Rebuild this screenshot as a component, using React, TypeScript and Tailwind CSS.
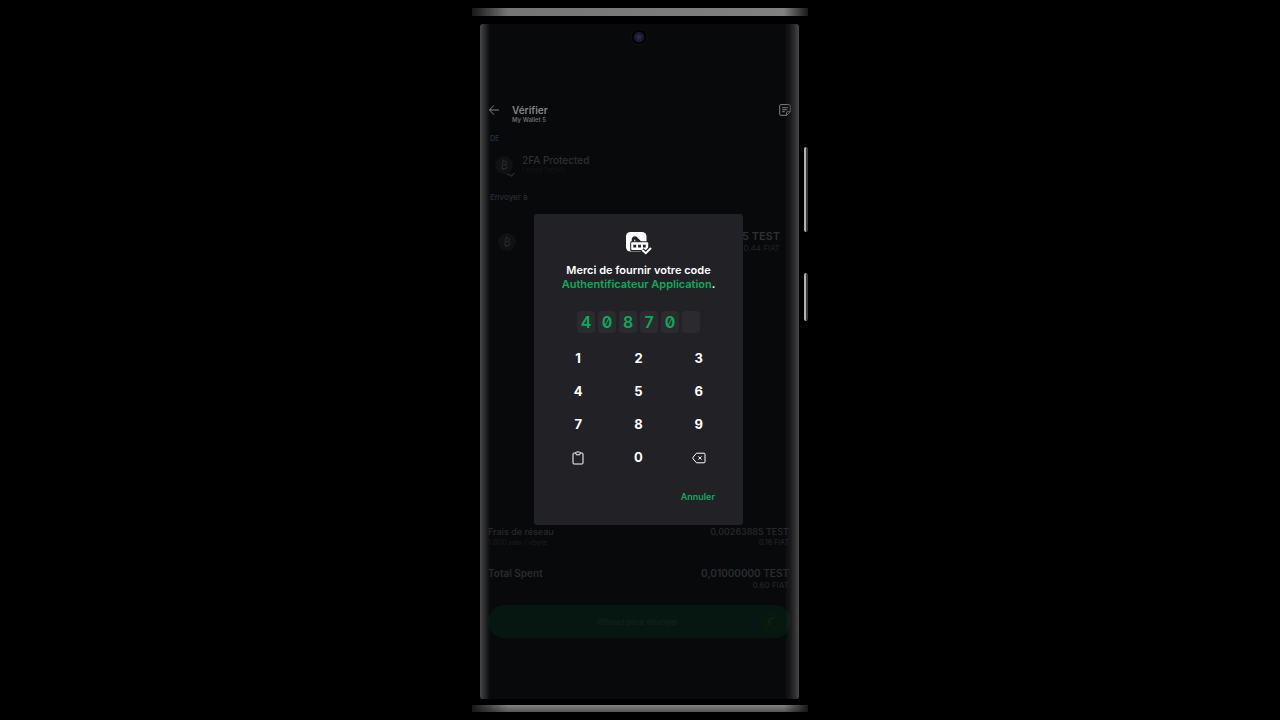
import type { ReactNode } from "react";

const code = ["4", "0", "8", "7", "0", ""];

function BackIcon() {
  return (
    <svg viewBox="0 0 12 12" className="size-3" fill="none" stroke="currentColor" strokeWidth="1">
      <path d="M11 6H1.5M6 1.3 1.4 6 6 10.7" />
    </svg>
  );
}

function NoteIcon() {
  return (
    <svg viewBox="0 0 12 12" className="size-3" fill="none" stroke="currentColor" strokeWidth="1">
      <path d="M11.3 7.6V1.6a1 1 0 0 0-1-1H1.7a1 1 0 0 0-1 1v8.7a1 1 0 0 0 1 1h6l3.6-3.7H8.6a1 1 0 0 0-1 1v2.6" />
      <path d="M3.2 3.7h5.6M3.2 5.7h5M3.2 7.7h2.6" />
    </svg>
  );
}

function AuthenticatorIcon() {
  return (
    <svg viewBox="0 0 26 23" className="h-[23px] w-[26px]" fill="none">
      <rect x="0" y="0" width="20.5" height="19.5" rx="4.500" fill="#ffffff" />
      <path d="M5.700 9.800V7.500C5.700 5.500 7 4.200 8.700 4.200c1 0 1.700.3 2.400 1L15.500 9.800h-5L8.200 7.200v2.600Z" fill="#222226" />
      <rect x="4.200" y="9.300" width="19" height="10" rx="1.500" fill="#222226" />
      <rect x="5.200" y="10.300" width="17" height="7.700" rx="1" fill="#ffffff" />
      <path d="M7.300 12.700h2.900v2.900H7.300zM12.100 12.700H15v2.900h-2.900zM16.900 12.700h2.900v2.900h-2.900z" fill="#222226" />
      <path d="m16 18 3.800 3.300L25 16" stroke="#222226" strokeWidth="4.500" />
      <path d="m16.200 18 3.600 3.200L25 16" stroke="#ffffff" strokeWidth="2" />
    </svg>
  );
}

function ClipboardIcon() {
  return (
    <svg viewBox="0 0 12 14" className="h-3.5 w-3" fill="none" stroke="currentColor" strokeWidth="1">
      <path d="M3.600 2H2a1 1 0 0 0-1 1v9a1 1 0 0 0 1 1h8a1 1 0 0 0 1-1V3a1 1 0 0 0-1-1H8.400" />
      <path d="M3.600 1.600 4.800 1h2.400l1.200.6-.7 2.200H4.300z" />
    </svg>
  );
}

function BackspaceIcon() {
  return (
    <svg viewBox="0 0 14 12" className="h-3 w-3.5" fill="none" stroke="currentColor" strokeWidth="1">
      <path d="M4.500 1.200h7.500a1 1 0 0 1 1 1v7.600a1 1 0 0 1-1 1H4.500L1 6.800V5.200z" />
      <path d="m6.300 4.400 3.200 3.200M9.500 4.400 6.300 7.600" />
    </svg>
  );
}

function CoinIcon({ checked = false }: { checked?: boolean }) {
  return (
    <svg viewBox="0 0 26 26" className="size-[26px] shrink-0" fill="none">
      <circle cx="12" cy="12" r="9" fill="#101113" />
      <g stroke="#28292b" strokeWidth="1.100">
        <path d="M10.500 8h2a1.700 1.700 0 0 1 0 3.700h-2.200 2.600a1.900 1.900 0 0 1 0 3.900H9.500M10.800 8l-1 7.600M11.600 6.500V8M11.200 15.600v1.700" />
      </g>
      {checked && <path d="M15 21.500h2.500m.5 0 1.500 1.500 3-3" stroke="#28292b" strokeWidth="1.500" />}
    </svg>
  );
}

function Key({ label, children }: { label: string; children?: ReactNode }) {
  return (
    <button type="button" aria-label={label} className="flex items-center justify-center text-[13px] font-bold text-white">
      {children ?? label}
    </button>
  );
}

function Amount({ label, note, value, fiat, strong = false }: { label: string; note?: string; value: string; fiat: string; strong?: boolean }) {
  return (
    <div className={strong ? "flex justify-between text-[10px] font-semibold leading-3 text-[#2b2c2e]" : "flex justify-between text-[9px] font-medium leading-3 text-[#28292b]"}>
      <div>
        <p>{label}</p>
        {note && <p className="text-[7px] leading-[10px] text-[#18191b]">{note}</p>}
      </div>
      <div className="text-right">
        <p>{value}</p>
        <p className={strong ? "text-[8px] font-medium text-[#222325]" : "text-[7px] font-medium leading-[10px] text-[#222325]"}>{fiat}</p>
      </div>
    </div>
  );
}

function CodeDialog() {
  return (
    <section
      role="dialog"
      aria-labelledby="code-title"
      className="absolute inset-x-[54px] top-[190px] mr-0.5 flex flex-col items-center rounded-[3px] bg-[#222226] pt-[18px] pb-[21px]"
    >
      <AuthenticatorIcon />
      <h2 id="code-title" className="mt-2 text-center text-[11px] font-semibold leading-[14px] text-white">
        Merci de fournir votre code
        <br />
        <span className="text-[#0eaa5b]">Authentificateur Application</span>.
      </h2>
      <div className="mt-5 flex gap-[3px]">
        {code.map((digit, index) => (
          <input
            key={index}
            aria-label={`Chiffre ${index + 1}`}
            defaultValue={digit}
            maxLength={1}
            inputMode="numeric"
            className="h-[22px] w-[18px] rounded-[4px] bg-[#2b2b2f] text-center font-['Inter',sans-serif] text-base font-semibold leading-none text-[#0eaa5b] slashed-zero outline-none"
          />
        ))}
      </div>
      <div className="mt-[9px] grid w-[181px] grid-cols-3 auto-rows-[33px]">
        {["1", "2", "3", "4", "5", "6", "7", "8", "9"].map((digit) => (
          <Key key={digit} label={digit} />
        ))}
        <Key label="Coller">
          <ClipboardIcon />
        </Key>
        <Key label="0" />
        <Key label="Effacer">
          <BackspaceIcon />
        </Key>
      </div>
      <button type="button" className="mt-4 mr-7 self-end text-[9px] font-semibold leading-[14px] text-[#0eaa5b]">
        Annuler
      </button>
    </section>
  );
}

export default function App() {
  return (
    <main className="flex min-h-screen justify-center bg-black py-2 font-['Inter',sans-serif]">
      <div className="relative flex w-[336px] flex-col">
        <div className="flex h-2 justify-between bg-linear-to-r from-[#747474] to-[#828282]">
          <div className="h-full w-9 bg-linear-to-r from-[#171717] to-transparent" />
          <div className="h-full w-6 bg-linear-to-l from-[#171717] to-transparent" />
        </div>

        <div className="relative mt-2 mr-[9px] mb-1.5 ml-2 flex flex-1 flex-col overflow-hidden rounded-[3px] bg-[#08090b]">
          <svg viewBox="0 0 18 18" className="absolute top-1 left-[150px] size-[18px]">
            <circle cx="9" cy="9" r="8" fill="#020204" stroke="#17171b" strokeWidth="0.800" />
            <circle cx="9" cy="9" r="5.300" fill="#1b1a29" />
            <circle cx="9" cy="9" r="2.600" fill="#29265a" />
          </svg>

          <header className="mt-20 flex items-start px-2 text-[#848486]">
            <button type="button" aria-label="Retour">
              <BackIcon />
            </button>
            <div className="ml-3">
              <h1 className="text-[10px] font-semibold leading-3">Vérifier</h1>
              <p className="text-[6px] font-semibold leading-[7px] text-[#6b6b6d]">My Wallet 5</p>
            </div>
            <button type="button" aria-label="Ajouter une note" className="ml-auto">
              <NoteIcon />
            </button>
          </header>

          <h2 className="mt-2.5 px-2.5 text-[7px] font-semibold leading-3 text-[#2b2c2e]">DE</h2>
          <div className="mt-2 flex px-3">
            <CoinIcon checked />
            <div className="ml-1 pt-px">
              <p className="text-[10px] font-medium leading-3 text-[#2f3032]">2FA Protected</p>
              <p className="text-[6px] leading-2 text-[#151618]">Legacy SegWit</p>
            </div>
          </div>

          <h2 className="mt-3 px-2.5 text-[8px] font-medium leading-3 text-[#2b2c2e]">Envoyer à</h2>
          <div className="mt-[27px] flex items-start justify-between pr-[19px] pl-[15px]">
            <CoinIcon />
            <div className="text-right">
              <p className="text-[11px] font-semibold leading-3 text-[#2f3032]">0,00736115 TEST</p>
              <p className="text-[8px] leading-3 text-[#222325]">0.44 FIAT</p>
            </div>
          </div>

          <div className="mt-auto flex flex-col gap-[19px] pr-2.5 pl-2">
            <Amount label="Frais de réseau" note="1.000 sats / vbyte" value="0,00263885 TEST" fiat="0.16 FIAT" />
            <Amount label="Total Spent" value="0,01000000 TEST" fiat="0.60 FIAT" strong />
          </div>
          <button
            type="button"
            className="mx-2 mt-3.5 mb-[61px] flex h-[33px] items-center rounded-full bg-[#061711] text-[8px] font-medium text-[#10241b]"
          >
            <span className="flex-1 pl-7">Glissez pour envoyer</span>
            <svg viewBox="0 0 28 28" className="mr-1 size-7" fill="none">
              <circle cx="14" cy="14" r="12" fill="#07190f" />
              <path d="M10 17v-3a4 4 0 0 1 4-4h2" stroke="#14261f" strokeWidth="1.200" />
            </svg>
          </button>

          <div className="pointer-events-none absolute inset-y-0 left-0 w-2.5 bg-linear-to-r from-[#484848] via-[#29292a] to-transparent" />
          <div className="pointer-events-none absolute inset-y-0 right-0 w-3.5 bg-linear-to-l from-[#484848] via-[#29292a]/70 to-transparent" />

          <CodeDialog />
        </div>

        <div className="flex h-[7px] justify-between bg-linear-to-b from-[#838383] to-[#555555]">
          <div className="h-full w-9 bg-linear-to-r from-[#171717] to-transparent" />
          <div className="h-full w-6 bg-linear-to-l from-[#171717] to-transparent" />
        </div>

        <div className="absolute top-[139px] right-0 h-[85px] w-1 rounded-xs border-r-2 border-[#3b3b3b] bg-[#b3b3b3]" />
        <div className="absolute top-[265px] right-0 h-12 w-1 rounded-xs border-r-2 border-[#3b3b3b] bg-[#b3b3b3]" />
      </div>
    </main>
  );
}
